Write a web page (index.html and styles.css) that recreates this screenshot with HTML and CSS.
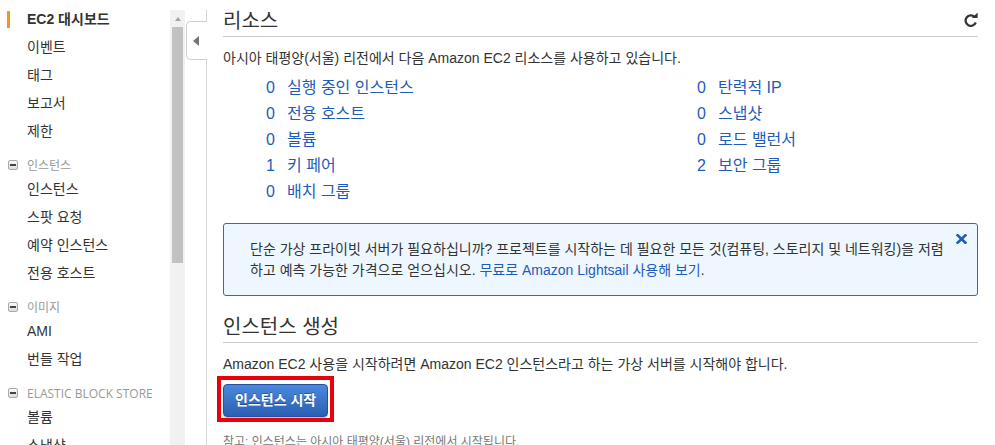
FILE: index.html
```html
<!DOCTYPE html>
<html lang="ko">
<head>
<meta charset="utf-8">
<title>EC2 대시보드</title>
<link rel="stylesheet" href="styles.css">
</head>
<body>
<div class="layout">
  <nav class="sidebar">
    <ul class="nav">
      <li class="nav-item active">EC2 대시보드</li>
      <li class="nav-item">이벤트</li>
      <li class="nav-item">태그</li>
      <li class="nav-item">보고서</li>
      <li class="nav-item">제한</li>
    </ul>
    <div class="nav-section">
      <div class="nav-head"><span class="toggle"></span>인스턴스</div>
      <ul class="nav">
        <li class="nav-item">인스턴스</li>
        <li class="nav-item">스팟 요청</li>
        <li class="nav-item">예약 인스턴스</li>
        <li class="nav-item">전용 호스트</li>
      </ul>
    </div>
    <div class="nav-section">
      <div class="nav-head"><span class="toggle"></span>이미지</div>
      <ul class="nav">
        <li class="nav-item">AMI</li>
        <li class="nav-item">번들 작업</li>
      </ul>
    </div>
    <div class="nav-section">
      <div class="nav-head"><span class="toggle"></span>ELASTIC BLOCK STORE</div>
      <ul class="nav">
        <li class="nav-item">볼륨</li>
        <li class="nav-item">스냅샷</li>
      </ul>
    </div>
  </nav>

  <div class="scrollbar">
    <span class="scroll-arrow"></span>
    <span class="scroll-thumb"></span>
  </div>

  <main class="main">
    <span class="collapse-tab"><span class="tab-arrow"></span></span>

    <div class="section-head">
      <h2 class="section-title">리소스</h2>
      <svg class="refresh" width="15" height="15" viewBox="0 0 16 16" aria-hidden="true">
        <path d="M12.3 5.2 A5.6 5.6 0 1 0 13.6 11.2" fill="none" stroke="#333" stroke-width="2.4"/>
        <polygon points="9.4,6.4 15.6,0.4 15.6,6.4" fill="#333"/>
      </svg>
    </div>
    <p class="desc">아시아 태평양(서울) 리전에서 다음 Amazon EC2 리소스를 사용하고 있습니다.</p>

    <div class="resources">
      <ul class="res-col">
        <li class="res-item"><span class="num">0</span><a class="link">실행 중인 인스턴스</a></li>
        <li class="res-item"><span class="num">0</span><a class="link">전용 호스트</a></li>
        <li class="res-item"><span class="num">0</span><a class="link">볼륨</a></li>
        <li class="res-item"><span class="num">1</span><a class="link">키 페어</a></li>
        <li class="res-item"><span class="num">0</span><a class="link">배치 그룹</a></li>
      </ul>
      <ul class="res-col">
        <li class="res-item"><span class="num">0</span><a class="link">탄력적 IP</a></li>
        <li class="res-item"><span class="num">0</span><a class="link">스냅샷</a></li>
        <li class="res-item"><span class="num">0</span><a class="link">로드 밸런서</a></li>
        <li class="res-item"><span class="num">2</span><a class="link">보안 그룹</a></li>
      </ul>
    </div>

    <div class="info-box">
      <p class="info-text">단순 가상 프라이빗 서버가 필요하십니까? 프로젝트를 시작하는 데 필요한 모든 것(컴퓨팅, 스토리지 및 네트워킹)을 저렴하고 예측 가능한 가격으로 얻으십시오. <a class="link">무료로 Amazon Lightsail 사용해 보기</a>.</p>
      <svg class="close" width="11" height="10" viewBox="0 0 11 10" aria-hidden="true">
        <path d="M1.6 1.3 L9.4 8.7 M9.4 1.3 L1.6 8.7" stroke="#1f5cb9" stroke-width="2.6" stroke-linecap="square"/>
      </svg>
    </div>

    <div class="section-head">
      <h2 class="section-title">인스턴스 생성</h2>
    </div>
    <p class="desc">Amazon EC2 사용을 시작하려면 Amazon EC2 인스턴스라고 하는 가상 서버를 시작해야 합니다.</p>
    <div class="highlight">
      <button class="btn-primary" type="button">인스턴스 시작</button>
    </div>
    <p class="note">참고: 인스턴스는 아시아 태평양(서울) 리전에서 시작됩니다.</p>
  </main>
</div>
</body>
</html>
```

FILE: styles.css
```css
html, body {
  margin: 0;
  padding: 0;
  height: 100%;
  overflow: hidden;
  background: #fff;
}

body {
  font-family: "Liberation Sans", "Noto Sans CJK KR", sans-serif;
  font-size: 14px;
  color: #333;
}

.layout {
  display: flex;
  height: 445px;
  overflow: hidden;
}

/* ---------- sidebar ---------- */
.sidebar {
  width: 170px;
  flex-shrink: 0;
  padding-top: 5px;
  box-sizing: border-box;
}

.nav {
  list-style: none;
  margin: 0;
  padding: 0;
}

.nav-item {
  position: relative;
  height: 28px;
  line-height: 28px;
  padding-left: 27px;
  color: #333;
  white-space: nowrap;
}

.nav-item.active {
  font-weight: bold;
}

.nav-item.active::before {
  content: "";
  position: absolute;
  left: 7px;
  top: 6px;
  width: 3px;
  height: 17px;
  background: #f7931e;
}

.nav-section {
  margin-top: 10px;
}

.nav-head {
  display: flex;
  align-items: center;
  height: 20px;
  padding-left: 8px;
  font-family: "Open Sans", "Noto Sans CJK KR", sans-serif;
  font-size: 12px;
  color: #999;
  white-space: nowrap;
}

.toggle {
  position: relative;
  width: 10px;
  height: 10px;
  margin-right: 9px;
  box-sizing: border-box;
  border: 1px solid #a9a9a9;
  border-radius: 2px;
  background: linear-gradient(#fafafa, #dcdcdc);
  flex-shrink: 0;
}

.toggle::after {
  content: "";
  position: absolute;
  left: 1px;
  top: 3px;
  width: 6px;
  height: 2px;
  background: #444;
}

/* ---------- fake scrollbar ---------- */
.scrollbar {
  width: 15px;
  flex-shrink: 0;
  margin-top: 10px;
  background: #f1f1f1;
  display: flex;
  flex-direction: column;
  align-items: center;
}

.scroll-arrow {
  margin-top: 7px;
  width: 0;
  height: 0;
  border-left: 3.5px solid transparent;
  border-right: 3.5px solid transparent;
  border-bottom: 4px solid #a3a3a3;
}

.scroll-thumb {
  margin-top: 6px;
  width: 11px;
  height: 236px;
  background: #c1c1c1;
}

/* ---------- main ---------- */
.main {
  position: relative;
  flex: 1;
  min-width: 0;
  margin-top: 10px;
  margin-left: 21px;
  padding: 0 17px 0 16px;
  border-left: 1px solid #d6d6d6;
}

.collapse-tab {
  position: absolute;
  left: -21px;
  top: 11px;
  width: 21px;
  height: 39px;
  box-sizing: border-box;
  background: #fff;
  border: 1px solid #cfcfcf;
  border-right: none;
  border-radius: 5px 0 0 5px;
  display: flex;
  align-items: center;
  padding-left: 6px;
}

.tab-arrow {
  width: 0;
  height: 0;
  border-top: 5px solid transparent;
  border-bottom: 5px solid transparent;
  border-right: 6px solid #757575;
}

.section-head {
  display: flex;
  justify-content: space-between;
  align-items: flex-start;
  padding-bottom: 4px;
  border-bottom: 1px solid #cccccc;
}

.section-title {
  margin: 0;
  font-size: 20px;
  font-weight: normal;
  line-height: 22px;
  color: #333;
}

.refresh {
  margin-top: 2px;
  display: block;
}

.desc {
  margin: 11px 0 0;
  line-height: 20px;
  color: #333;
}

.link {
  color: #1f5cb9;
  text-decoration: none;
}

.resources {
  display: grid;
  grid-template-columns: 431px 1fr;
  margin-top: 7px;
  padding-left: 43px;
}

.res-col {
  list-style: none;
  margin: 0;
  padding: 0;
}

.res-item {
  display: flex;
  font-size: 16px;
  line-height: 26px;
  white-space: nowrap;
}

.res-item .num {
  width: 21px;
  color: #1f5cb9;
}

.info-box {
  position: relative;
  margin-top: 18px;
  padding: 15px 25px 14px 26px;
  border: 1px solid #2f69c3;
  border-radius: 3px;
  background: #eef7ff;
}

.info-text {
  margin: 0;
  line-height: 21px;
  color: #333;
}

.close {
  position: absolute;
  top: 10px;
  right: 10px;
  display: block;
}

.info-box + .section-head {
  margin-top: 20px;
}

.highlight {
  display: inline-block;
  margin: 2px 0 0 -6px;
  padding: 4px 2px 1px 2px;
  border: 4px solid #e8000b;
  line-height: 0;
}

.btn-primary {
  height: 33px;
  padding: 0 11px;
  border: 1px solid #24509c;
  border-radius: 4px;
  background: linear-gradient(#4a89dc, #2b5fb4);
  box-shadow: 0 1px 1px rgba(0, 0, 0, 0.25);
  color: #fff;
  font-family: "Liberation Sans", "Noto Sans CJK KR", sans-serif;
  font-size: 14px;
  font-weight: bold;
  line-height: 31px;
  text-shadow: 0 -1px 0 rgba(0, 0, 0, 0.3);
}

.note {
  margin: 10px 0 0;
  font-size: 12px;
  line-height: 20px;
  color: #777;
}
```
